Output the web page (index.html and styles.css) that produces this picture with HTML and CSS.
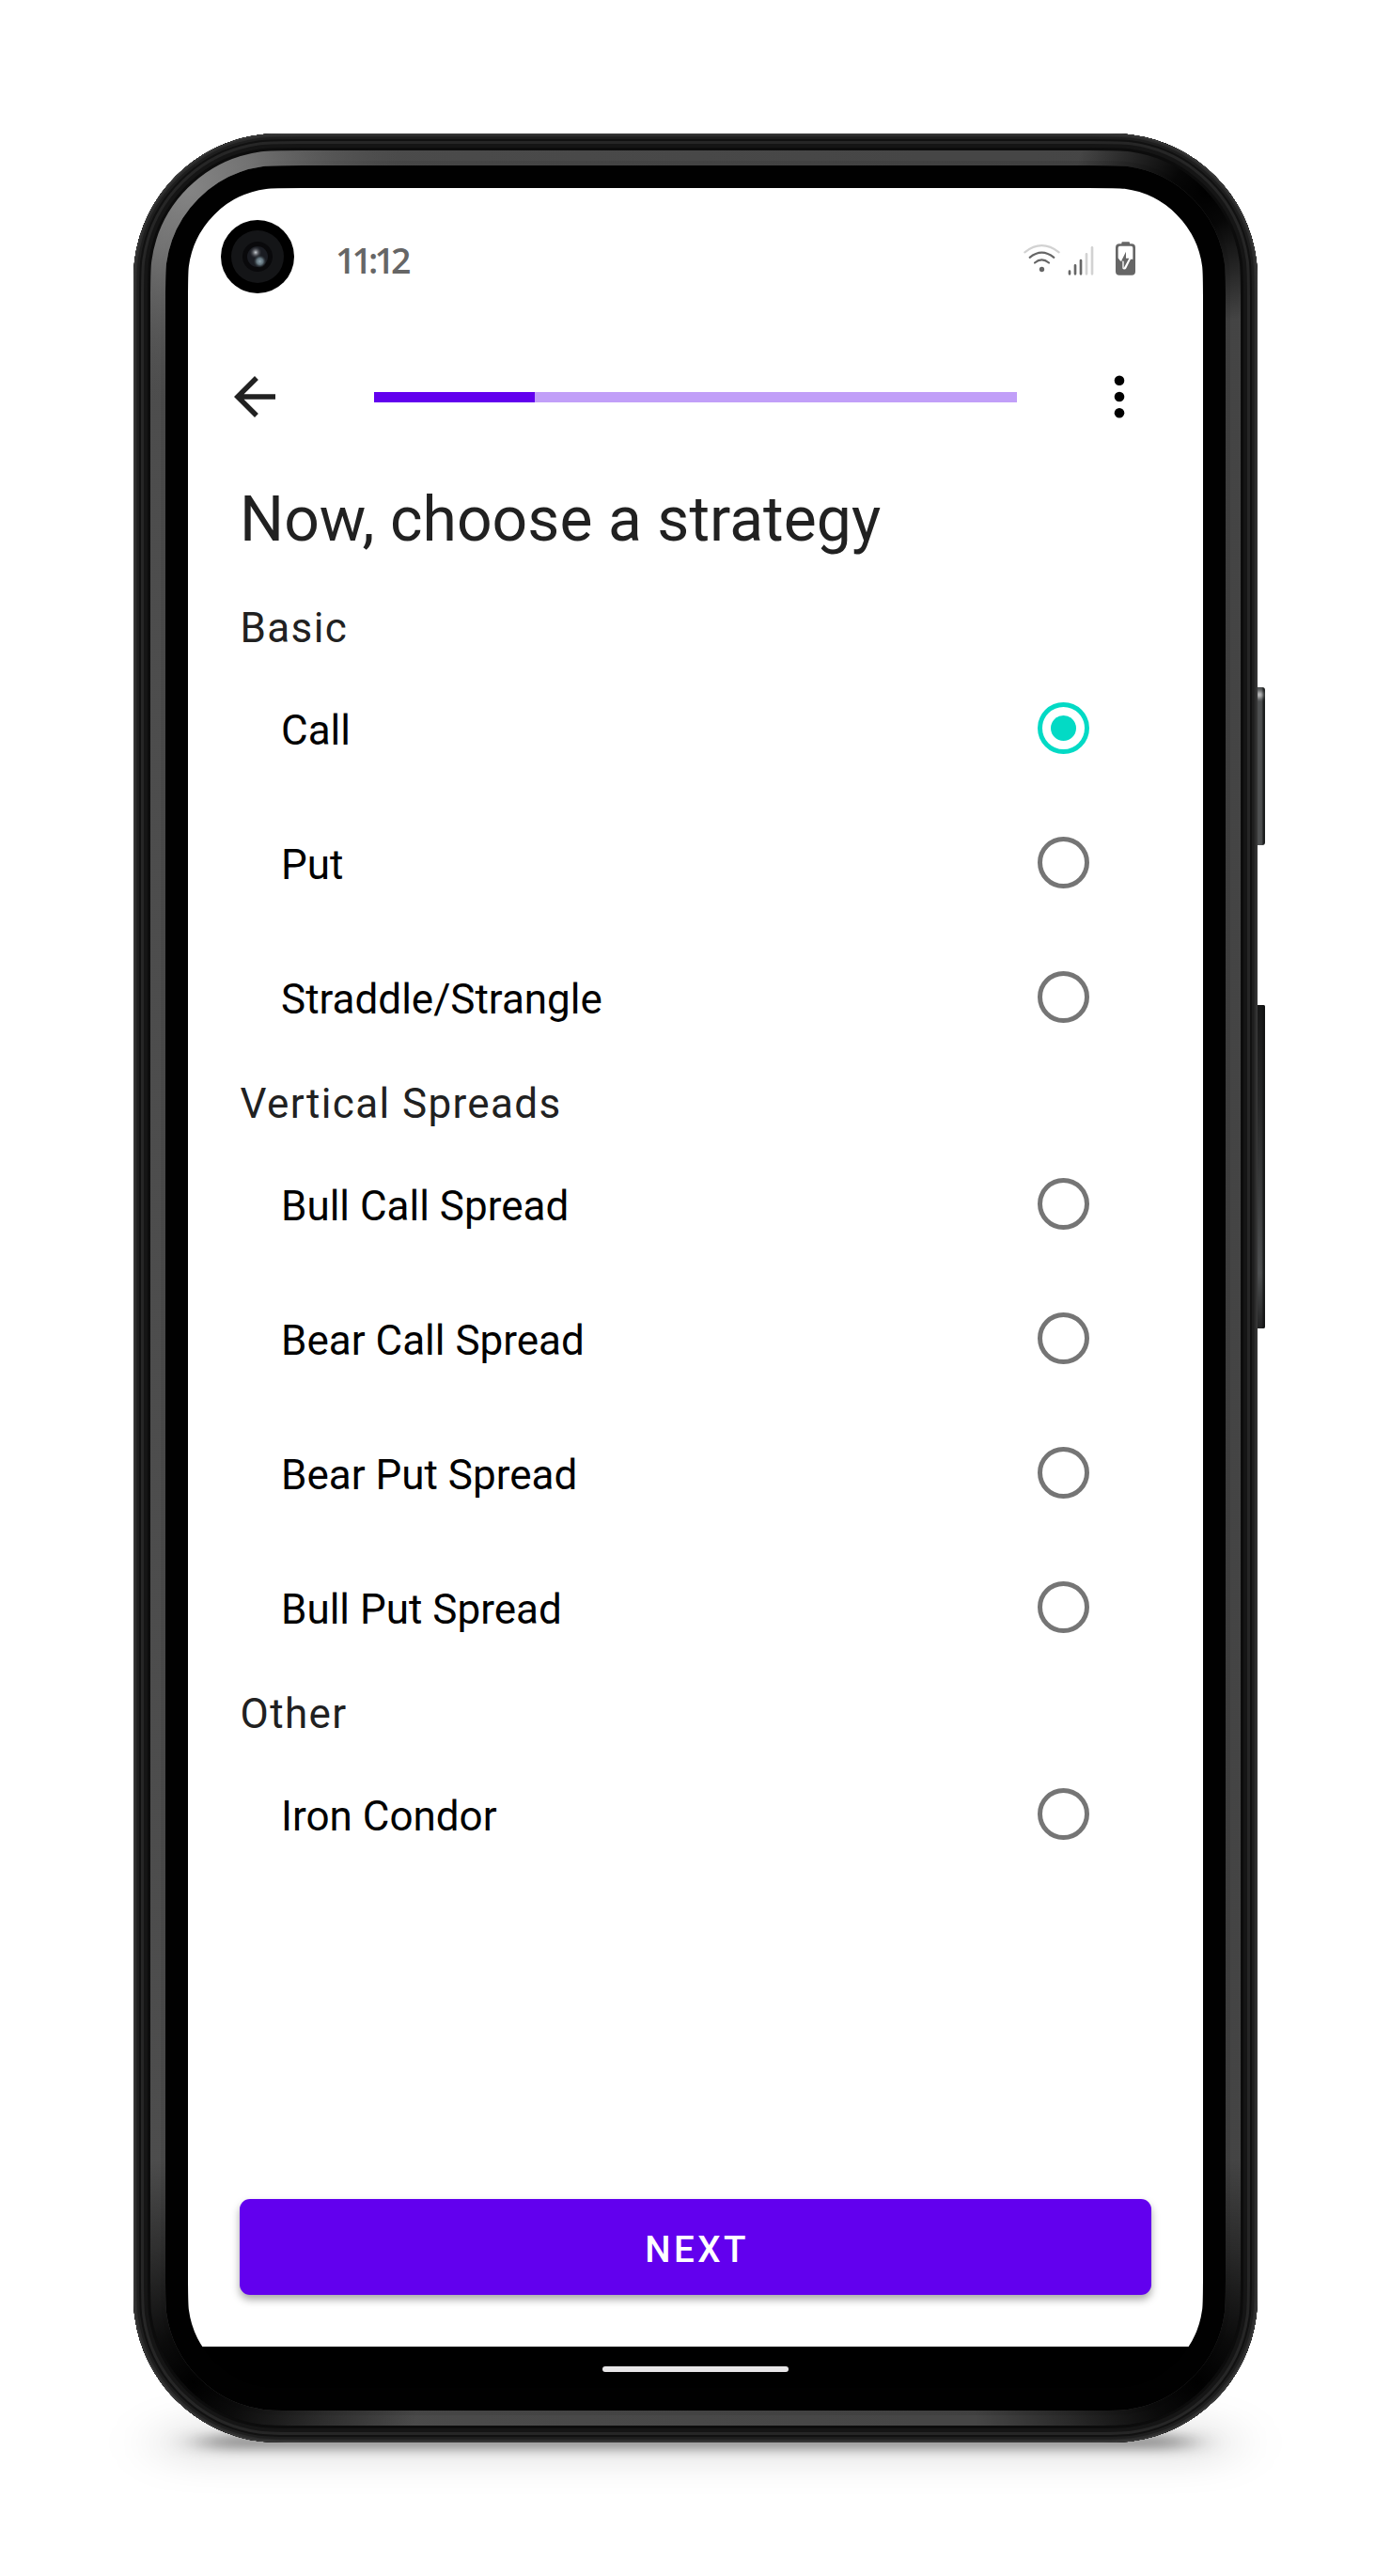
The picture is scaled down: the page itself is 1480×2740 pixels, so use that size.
FILE: index.html
```html
<!DOCTYPE html>
<html lang="en">
<head>
<meta charset="utf-8">
<title>Choose a strategy</title>
<link rel="stylesheet" href="styles.css">
</head>
<body>
<div class="stage">
  <svg class="frame" viewBox="0 0 1480 2740" aria-hidden="true">
    <defs>
      <path id="body" d="M1158 142c24.200 0 36.300 0 46.500 1.400a154 154 0 0 1 132.100 132.100c1.400 10.200 1.400 22.300 1.400 46.500V2418c0 24.200 0 36.300-1.400 46.500a154 154 0 0 1-132.100 132.100c-10.200 1.400-22.300 1.400-46.500 1.400H322c-24.200 0-36.300 0-46.500-1.400a154 154 0 0 1-132.100-132.100c-1.400-10.200-1.400-22.300-1.400-46.500V322c0-24.200 0-36.300 1.400-46.500a154 154 0 0 1 132.100-132.100c10.200-1.400 22.300-1.400 46.500-1.400Z"/>
      <clipPath id="bodyClip"><use href="#body"/></clipPath>
      <linearGradient id="rim" gradientUnits="userSpaceOnUse" x1="142" y1="0" x2="1338" y2="0">
        <stop offset="0" stop-color="#484848"/><stop offset="1" stop-color="#3e3e3e"/>
      </linearGradient>
      <radialGradient id="glow" gradientUnits="userSpaceOnUse" cx="200" cy="200" r="230">
        <stop offset="0" stop-color="#858585"/><stop offset=".3" stop-color="#7a7a7a" stop-opacity=".85"/><stop offset="1" stop-color="#555" stop-opacity="0"/>
      </radialGradient>
      <radialGradient id="darkTR" gradientUnits="userSpaceOnUse" cx="1283" cy="204" r="140">
        <stop offset="0" stop-color="#000"/><stop offset=".25" stop-color="#000" stop-opacity=".9"/><stop offset="1" stop-color="#000" stop-opacity="0"/>
      </radialGradient>
      <radialGradient id="darkBL" gradientUnits="userSpaceOnUse" cx="206" cy="2534" r="240">
        <stop offset="0" stop-color="#000"/><stop offset=".22" stop-color="#000" stop-opacity=".85"/><stop offset=".6" stop-color="#000" stop-opacity=".4"/><stop offset="1" stop-color="#000" stop-opacity="0"/>
      </radialGradient>
      <radialGradient id="darkBR" gradientUnits="userSpaceOnUse" cx="1274" cy="2534" r="240">
        <stop offset="0" stop-color="#000"/><stop offset=".22" stop-color="#000" stop-opacity=".85"/><stop offset=".6" stop-color="#000" stop-opacity=".4"/><stop offset="1" stop-color="#000" stop-opacity="0"/>
      </radialGradient>
      <linearGradient id="key" x1="0" x2="1" y1="0" y2="0">
        <stop offset="0" stop-color="#242626"/><stop offset=".25" stop-color="#2c2e2f"/><stop offset=".4" stop-color="#505253"/><stop offset=".7" stop-color="#4a4c4d"/><stop offset=".85" stop-color="#1c1e1e"/>
      </linearGradient>
      <linearGradient id="keyLong" x1="0" x2="0" y1="0" y2="1">
        <stop offset="0" stop-color="#111" stop-opacity=".9"/><stop offset=".3" stop-color="#111" stop-opacity=".65"/><stop offset=".83" stop-color="#111" stop-opacity="0"/><stop offset="1" stop-color="#111" stop-opacity=".7"/>
      </linearGradient>
      <filter id="soft" x="-20%" y="-300%" width="140%" height="700%"><feGaussianBlur stdDeviation="20 6"/></filter>
      <filter id="softWide" x="-20%" y="-200%" width="140%" height="500%"><feGaussianBlur stdDeviation="30 17"/></filter>
      <filter id="tiny" x="-50%" y="-50%" width="200%" height="200%"><feGaussianBlur stdDeviation="2"/></filter>
    </defs>

    <rect x="170" y="2576" width="1140" height="44" rx="22" fill="#000" fill-opacity=".1" filter="url(#softWide)"/>
    <rect x="215" y="2590" width="1050" height="15" rx="7" fill="#000" fill-opacity=".38" filter="url(#soft)"/>

    <!-- power and volume keys -->
    <rect x="1334" y="731" width="12" height="168" rx="3" fill="url(#key)"/>
    <circle cx="1340" cy="739" r="3.5" fill="#ddd" filter="url(#tiny)"/>
    <rect x="1334" y="1069" width="12" height="344" rx="2" fill="url(#key)"/>
    <rect x="1334" y="1069" width="12" height="344" rx="2" fill="url(#keyLong)"/>

    <!-- display, then the shell as strokes running inward from the edge -->
    <use href="#body" fill="#fff"/>
    <g clip-path="url(#bodyClip)" fill="none">
      <rect x="190" y="2496" width="1100" height="60" fill="#000"/>
      <use href="#body" stroke="#010101" stroke-width="116"/>
      <use href="#body" stroke="url(#rim)" stroke-width="68"/>
      <use href="#body" stroke="#fff" stroke-opacity=".03" stroke-width="58"/>
      <use href="#body" stroke="url(#glow)" stroke-width="68"/>
      <use href="#body" stroke="url(#darkTR)" stroke-width="68"/>
      <use href="#body" stroke="url(#darkBL)" stroke-width="68"/>
      <use href="#body" stroke="url(#darkBR)" stroke-width="68"/>
      <use href="#body" stroke="#0c0c0c" stroke-width="36"/>
      <use href="#body" stroke="#151515" stroke-width="30"/>
      <use href="#body" stroke="#262626" stroke-width="22"/>
      <use href="#body" stroke="#111" stroke-width="16"/>
      <use href="#body" stroke="#1e1e1e" stroke-width="12"/>
      <use href="#body" stroke="#2b2b2b" stroke-width="7"/>
      <use href="#body" stroke="#393939" stroke-width="3"/>
    </g>
  </svg>

  <main class="screen">
    <header class="status">
      <svg class="camera" viewBox="0 0 78 78" aria-hidden="true">
        <defs>
          <radialGradient id="spot"><stop offset="0" stop-color="#cfd3d8"/><stop offset="1" stop-color="#34363c" stop-opacity="0"/></radialGradient>
          <radialGradient id="spotBlue"><stop offset="0" stop-color="#8fa3ad"/><stop offset=".5" stop-color="#60717a"/><stop offset="1" stop-color="#22282c" stop-opacity="0"/></radialGradient>
        </defs>
        <circle cx="39" cy="39" r="39"/>
        <circle cx="39" cy="39" r="28" fill="#141517"/>
        <circle cx="39" cy="39" r="16" fill="#09090b"/>
        <circle cx="39" cy="39" r="11" fill="#1a1c22"/>
        <circle cx="37" cy="34.500" r="6.500" fill="url(#spot)"/>
        <circle cx="41.500" cy="44" r="7" fill="url(#spotBlue)"/>
      </svg>
      <span class="time">11:12</span>
      <svg class="indicators" viewBox="144 405 366 120" fill="none" stroke-linecap="round" aria-label="Wi-Fi, signal, battery charging">
        <g stroke="#666" stroke-width="6.500">
          <path d="M151 445Q205 402 260 445" stroke="#d2d2d2"/>
          <path d="M167 461.500Q205 430 244 461.500"/>
          <path d="M183 478.500Q205 460 228 478.500"/>
        </g>
        <circle cx="205.500" cy="499.500" r="8" fill="#666"/>
        <g stroke="#666" stroke-width="8">
          <path d="M294 506V514M312 487V514M330 471V514"/>
          <path d="M348 451V514M366 430V514" stroke="#d2d2d2"/>
        </g>
        <path d="M463 411.500h20q3 0 3 4v2h6q12 0 12 12v77q0 12-12 12h-39q-12 0-12-12v-77q0-12 12-12h7v-2q0-4 3-4z" fill="#666"/>
        <path d="M455 425.500h35q6 0 6 6v36l-7 0-14 28q-2 5-8 4-6-2-4-8v-17l-7-2-7-9v-32q0-6 6-6z" fill="#fff"/>
        <path d="M474 443v21h10l-17 32v-23h-8z" fill="#666"/>
      </svg>
    </header>

    <nav class="appbar">
      <svg class="back" viewBox="0 0 24 24" aria-label="Back"><path d="M20 11H7.830l5.590-5.590L12 4l-8 8 8 8 1.410-1.410L7.830 13H20v-2z"/></svg>
      <div class="progress"><div class="progress-value" style="width:25%"></div></div>
      <svg class="more" viewBox="0 0 12 46" aria-label="More options"><circle cx="6" cy="5.800" r="5.300"/><circle cx="6" cy="23" r="5.300"/><circle cx="6" cy="40.200" r="5.300"/></svg>
    </nav>

    <h1 class="title">Now, choose a strategy</h1>

    <div class="list">
      <h2 class="group">Basic</h2>
      <div class="option"><span>Call</span><i class="radio checked"></i></div>
      <div class="option"><span>Put</span><i class="radio"></i></div>
      <div class="option"><span>Straddle/Strangle</span><i class="radio"></i></div>
      <h2 class="group">Vertical Spreads</h2>
      <div class="option"><span>Bull Call Spread</span><i class="radio"></i></div>
      <div class="option"><span>Bear Call Spread</span><i class="radio"></i></div>
      <div class="option"><span>Bear Put Spread</span><i class="radio"></i></div>
      <div class="option"><span>Bull Put Spread</span><i class="radio"></i></div>
      <h2 class="group">Other</h2>
      <div class="option"><span>Iron Condor</span><i class="radio"></i></div>
    </div>

    <button class="next">NEXT</button>
    <footer class="gesture"><div class="pill"></div></footer>
  </main>
</div>
</body>
</html>
```
FILE: styles.css
```css
* { box-sizing: border-box; }

body {
  margin: 0;
  background: #fff;
  font-family: Roboto, "Liberation Sans", sans-serif;
}

.stage {
  position: relative;
  width: 1480px;
  height: 2740px;
  padding: 200px;
  overflow: hidden;
}

.frame {
  position: absolute;
  inset: 0;
  width: 1480px;
  height: 2740px;
}

.screen {
  position: relative;
  display: flex;
  flex-direction: column;
  width: 1080px;
  height: 2340px;
}

.status {
  display: flex;
  align-items: flex-start;
  height: 156px;
  padding: 34px 70px 0 35px;
}

.camera { width: 78px; height: 78px; }

.time {
  margin: 21px 0 0 44px;
  font: 600 37.500px/44px "Open Sans", sans-serif;
  letter-spacing: -3.900px;
  color: #666;
}

.indicators {
  width: 122px;
  height: 40px;
  margin: 21px 0 0 auto;
}

.appbar {
  display: flex;
  align-items: center;
  height: 132px;
  padding: 0 83px 0 38px;
}

.back { width: 66px; height: 66px; fill: #212121; }

.progress {
  width: 684px;
  height: 11px;
  margin-left: 94px;
  background: #c19ff8;
}

.progress-value { height: 100%; background: #6200ee; }

.more { width: 12px; height: 46px; margin-left: auto; }

.title {
  margin: 0 0 0 55px;
  padding-top: 25px;
  height: 138px;
  font-size: 66px;
  font-weight: 400;
  line-height: 80px;
  letter-spacing: .05px;
  color: #212121;
}

.group {
  margin: 0;
  height: 77px;
  padding: 16px 0 0 55.500px;
  font-size: 44px;
  font-weight: 400;
  line-height: 52px;
  letter-spacing: 1.370px;
  color: #212121;
}

.option {
  display: flex;
  align-items: center;
  justify-content: space-between;
  height: 143px;
  padding: 0 121px 0 99px;
  font-size: 44px;
  color: #000;
}

.option span { padding-top: 5px; }

.radio {
  display: grid;
  place-items: center;
  width: 55px;
  height: 55px;
  border: 5.500px solid #757575;
  border-radius: 50%;
}

.radio.checked { border-color: #03dac5; }

.radio.checked::after {
  content: "";
  width: 27.500px;
  height: 27.500px;
  border-radius: 50%;
  background: #03dac5;
}

.next {
  height: 102px;
  margin: auto 55px 55px;
  padding: 4px 0 0 3px;
  border: 0;
  border-radius: 11px;
  background: #6200ee;
  box-shadow: 0 5px 9px rgba(0, 0, 0, .34);
  color: #fff;
  font: 500 38.500px/45px Roboto, sans-serif;
  letter-spacing: 3.440px;
}

.gesture {
  display: flex;
  justify-content: center;
  height: 44px;
  padding-top: 21px;
}

.pill {
  width: 198px;
  height: 6px;
  border-radius: 3px;
  background: #e8e6e8;
}
```
